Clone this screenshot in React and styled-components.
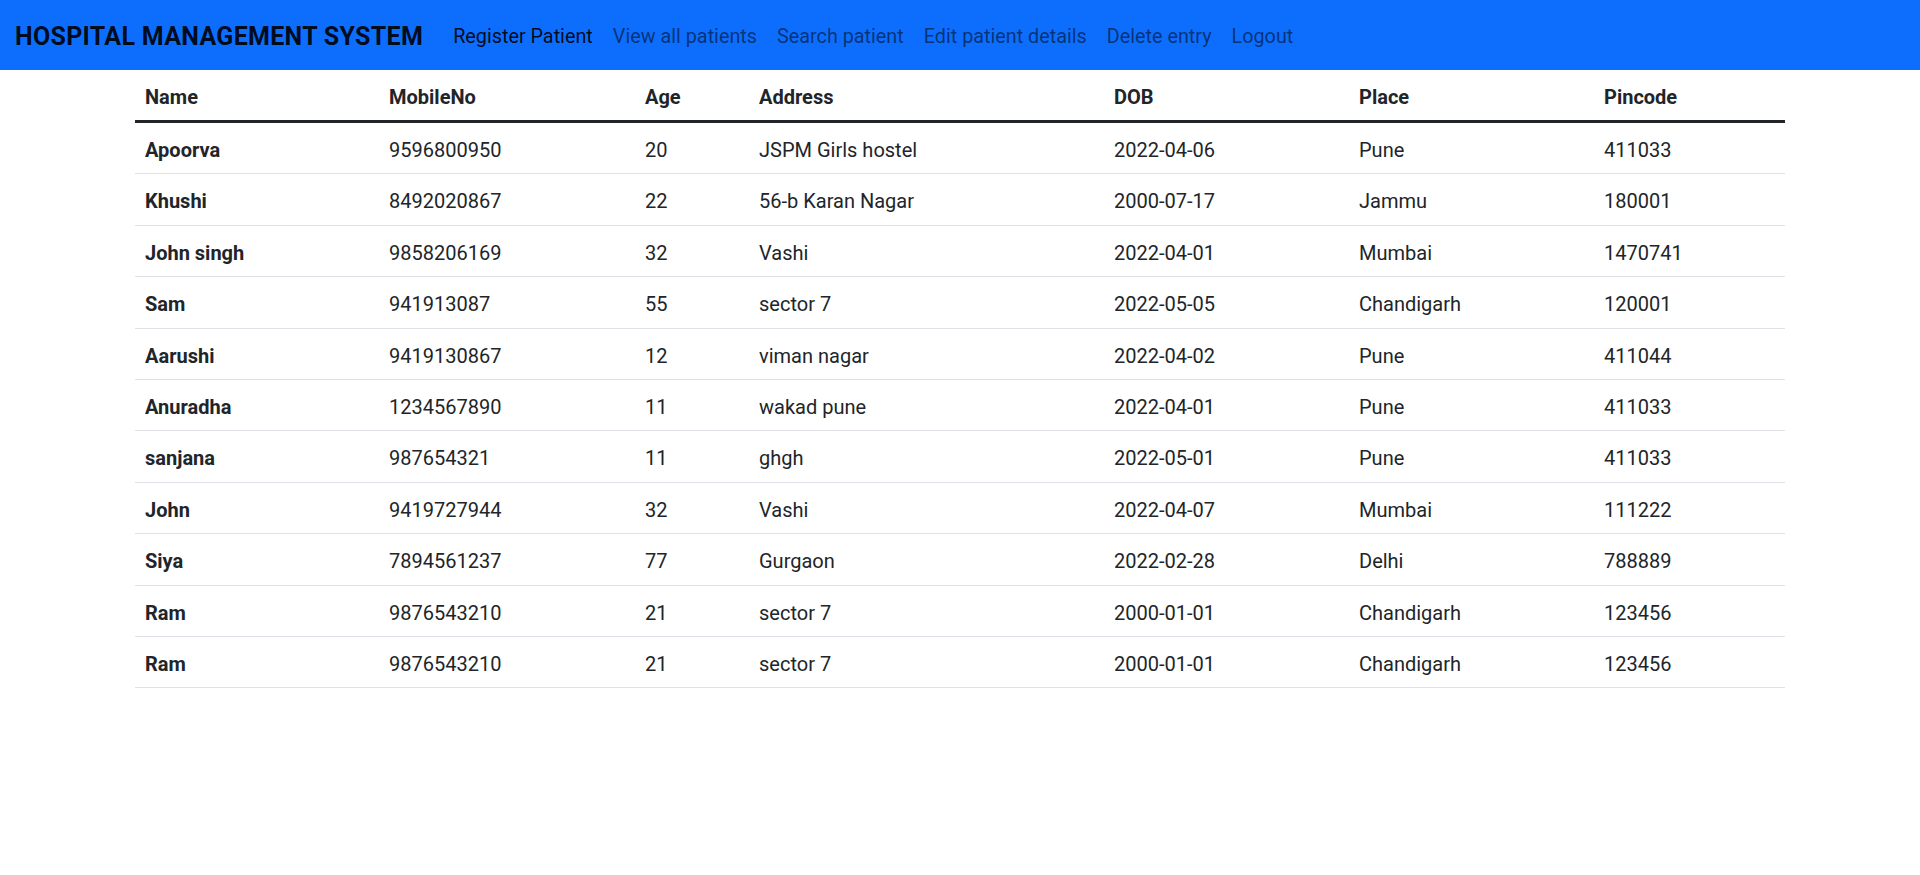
import React from "react";
import styled, { createGlobalStyle } from "styled-components";

const GlobalStyle = createGlobalStyle`
  * { box-sizing: border-box; }
  html, body {
    margin: 0;
    padding: 0;
    background: #ffffff;
    font-family: "Segoe UI", Roboto, "Noto Sans", "Liberation Sans", sans-serif;
    font-size: 20px;
    line-height: 1.5;
    color: #212529;
  }
`;

const Navbar = styled.nav`
  background: #0d6efd;
  height: 70px;
  display: flex;
  align-items: center;
  padding: 4px 15px 0;
`;

const Brand = styled.a`
  font-size: 25px;
  font-weight: 700;
  color: rgba(0, 0, 0, 0.9);
  text-decoration: none;
  margin-right: 20px;
  white-space: nowrap;
  letter-spacing: 0.3px;
`;

const NavList = styled.ul`
  list-style: none;
  margin: 0;
  padding: 0;
  display: flex;
  align-items: center;
`;

const NavLink = styled.a`
  display: block;
  padding: 10px;
  font-size: 19.8px;
  line-height: 30px;
  text-decoration: none;
  white-space: nowrap;
  color: ${(p) => (p.$active ? "rgba(0, 0, 0, 0.9)" : "rgba(0, 0, 0, 0.55)")};
`;

const Table = styled.table`
  width: 1650px;
  margin: 0 auto;
  border-collapse: collapse;
  table-layout: fixed;
  color: #212529;
`;

const HeadCell = styled.th`
  text-align: left;
  font-weight: 700;
  padding: 12px 10px 8px;
  line-height: 30px;
  border-bottom: 3px solid #212529;
`;

const RowHead = styled.th`
  text-align: left;
  font-weight: 700;
  padding: 12px 10px 8px;
  line-height: 30.4px;
  border-bottom: 1px solid #dee2e6;
`;

const Cell = styled.td`
  padding: 12px 10px 8px;
  line-height: 30.4px;
  border-bottom: 1px solid #dee2e6;
  white-space: nowrap;
`;

const columns = [
  { key: "name", label: "Name", width: 244 },
  { key: "mobile", label: "MobileNo", width: 256 },
  { key: "age", label: "Age", width: 114 },
  { key: "address", label: "Address", width: 355 },
  { key: "dob", label: "DOB", width: 245 },
  { key: "place", label: "Place", width: 245 },
  { key: "pincode", label: "Pincode", width: 191 },
];

const patients = [
  ["Apoorva", "9596800950", "20", "JSPM Girls hostel", "2022-04-06", "Pune", "411033"],
  ["Khushi", "8492020867", "22", "56-b Karan Nagar", "2000-07-17", "Jammu", "180001"],
  ["John singh", "9858206169", "32", "Vashi", "2022-04-01", "Mumbai", "1470741"],
  ["Sam", "941913087", "55", "sector 7", "2022-05-05", "Chandigarh", "120001"],
  ["Aarushi", "9419130867", "12", "viman nagar", "2022-04-02", "Pune", "411044"],
  ["Anuradha", "1234567890", "11", "wakad pune", "2022-04-01", "Pune", "411033"],
  ["sanjana", "987654321", "11", "ghgh", "2022-05-01", "Pune", "411033"],
  ["John", "9419727944", "32", "Vashi", "2022-04-07", "Mumbai", "111222"],
  ["Siya", "7894561237", "77", "Gurgaon", "2022-02-28", "Delhi", "788889"],
  ["Ram", "9876543210", "21", "sector 7", "2000-01-01", "Chandigarh", "123456"],
  ["Ram", "9876543210", "21", "sector 7", "2000-01-01", "Chandigarh", "123456"],
];

const links = [
  { label: "Register Patient", active: true },
  { label: "View all patients" },
  { label: "Search patient" },
  { label: "Edit patient details" },
  { label: "Delete entry" },
  { label: "Logout" },
];

export default function App() {
  return (
    <>
      <GlobalStyle />
      <Navbar>
        <Brand href="#">HOSPITAL MANAGEMENT SYSTEM</Brand>
        <NavList>
          {links.map((l) => (
            <li key={l.label}>
              <NavLink href="#" $active={l.active}>
                {l.label}
              </NavLink>
            </li>
          ))}
        </NavList>
      </Navbar>
      <Table>
        <colgroup>
          {columns.map((c) => (
            <col key={c.key} style={{ width: c.width }} />
          ))}
        </colgroup>
        <thead>
          <tr>
            {columns.map((c) => (
              <HeadCell key={c.key} scope="col">
                {c.label}
              </HeadCell>
            ))}
          </tr>
        </thead>
        <tbody>
          {patients.map((row, i) => (
            <tr key={i}>
              <RowHead scope="row">{row[0]}</RowHead>
              {row.slice(1).map((v, j) => (
                <Cell key={j}>{v}</Cell>
              ))}
            </tr>
          ))}
        </tbody>
      </Table>
    </>
  );
}
